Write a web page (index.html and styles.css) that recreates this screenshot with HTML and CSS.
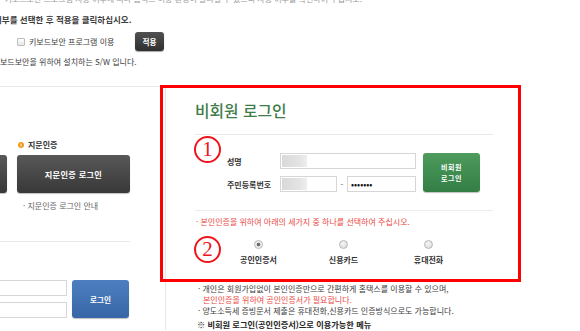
FILE: index.html
```html
<!DOCTYPE html>
<html lang="ko">
<head>
  <meta charset="UTF-8" />
  <meta name="viewport" content="width=device-width, initial-scale=1.0"/>
  <title>비회원 로그인</title>
  <link rel="stylesheet" href="styles.css">
</head>
<body>
  <div class="kb">
    <p class="kb-cut">· 키보드보안 프로그램 사용 여부에 따라 홈택스 이용 환경이 달라질 수 있으니 사용 여부를 확인하여 주십시오.</p>
    <p class="kb-guide">여부를 선택한 후 적용을 클릭하십시오.</p>
    <div class="kb-opt">
      <span class="chk"></span>
      <span class="kb-label">키보드보안 프로그램 이용</span>
      <button class="btn-apply">적용</button>
    </div>
    <p class="kb-desc">보드보안을 위하여 설치하는 S/W 입니다.</p>
  </div>

  <div class="main">
    <div class="auth-col">
      <div class="auth-row">
        <div class="auth-item">
          <div class="auth-head"></div>
          <div class="btn-dark"></div>
        </div>
        <div class="auth-item">
          <div class="auth-head">
            <svg class="bullet" width="6" height="6" viewBox="0 0 6 6"><circle cx="3" cy="3" r="3" fill="#f19a1d"/><path d="M2.3 1.7 L3.6 3 L2.3 4.3" stroke="#fff" stroke-width="0.9" fill="none"/></svg>
            지문인증
          </div>
          <div class="btn-dark">지문인증 로그인</div>
          <p class="auth-note">· 지문인증 로그인 안내</p>
        </div>
      </div>

      <div class="login-box">
        <div class="login-row">
          <div class="login-fields">
            <div class="ipt"></div>
            <div class="ipt"></div>
          </div>
          <div class="btn-blue">로그인</div>
        </div>
      </div>
    </div>

    <div class="nm-panel">
      <h2 class="nm-title">비회원 로그인</h2>

      <div class="nm-form">
        <div class="fields">
          <div class="frow">
            <span class="flabel">성명</span>
            <div class="ipt ipt-name"><span class="blur"></span></div>
          </div>
          <div class="frow">
            <span class="flabel">주민등록번호</span>
            <div class="ipt ipt-j1"><span class="blur"></span></div>
            <span class="dash">-</span>
            <div class="ipt ipt-j2"><span class="pw">•••••••</span></div>
          </div>
        </div>
        <div class="btn-green">비회원<br>로그인</div>
      </div>

      <div class="nm-auth">
        <p class="notice">· 본인인증을 위하여 아래의 세가지 중 하나를 선택하여 주십시오.</p>
        <div class="radios">
          <div class="ropt"><span class="radio on"></span><span class="rlabel">공인인증서</span></div>
          <div class="ropt"><span class="radio"></span><span class="rlabel">신용카드</span></div>
          <div class="ropt"><span class="radio"></span><span class="rlabel">휴대전화</span></div>
        </div>
      </div>

      <div class="nm-notes">
        <p>· 개인은 회원가입없이 본인인증만으로 간편하게 홈택스를 이용할 수 있으며,<br><span class="red">본인인증을 위하여 공인인증서가 필요합니다.</span></p>
        <p>· 양도소득세 증빙문서 제출은 휴대전화,신용카드 인증방식으로도 가능합니다.</p>
        <p class="menu-title">※ 비회원 로그인(공인인증서)으로 이용가능한 메뉴</p>
      </div>
    </div>
  </div>

  <!-- annotation overlay -->
  <div class="mark-box"></div>
  <span class="mark-num num1">1</span>
  <span class="mark-num num2">2</span>
</body>
</html>
```

FILE: styles.css
```css
body {
  margin: 0;
  width: 580px;
  height: 331px;
  overflow: hidden;
  position: relative;
  background: #fff;
  font-family: 'Noto Sans CJK KR', 'Noto Sans', sans-serif;
  font-size: 8px;
  line-height: 11px;
  color: #3c3c3c;
}

p, h2 {
  margin: 0;
}

/* keyboard security */
.kb-cut {
  margin-top: -7px;
  color: #999;
  white-space: nowrap;
}

.kb-guide {
  margin-top: 10px;
  margin-left: -6px;
  font-size: 8.5px;
  font-weight: bold;
  color: #3c3c3c;
}

.kb-opt {
  display: flex;
  align-items: center;
  height: 19px;
  margin-top: 7px;
  padding-left: 17px;
}

.chk {
  width: 6px;
  height: 6px;
  border: 1px solid #bcbcbc;
  border-radius: 1px;
  background: linear-gradient(#fff, #e6e6e6);
}

.kb-label {
  margin-left: 4px;
  width: 106px;
}

.btn-apply {
  width: 29px;
  height: 19px;
  padding: 0;
  border: 0;
  border-radius: 3px;
  background: linear-gradient(#505050, #303030);
  box-shadow: 0 1px 1px rgba(0, 0, 0, 0.35);
  color: #fff;
  font-family: inherit;
  font-size: 7.6px;
  font-weight: bold;
}

.kb-desc {
  margin-top: 5px;
}

/* main area */
.main {
  display: flex;
  margin-top: 19px;
}

.auth-col {
  width: 160px;
  border-top: 1px solid #e8e8e8;
  padding-top: 52px;
  flex-shrink: 0;
}

.auth-row {
  display: flex;
  gap: 10px;
  margin-left: -106px;
}

.auth-item {
  width: 113px;
}

.auth-head {
  display: flex;
  align-items: center;
  gap: 4px;
  height: 11px;
  padding-left: 1px;
  font-weight: bold;
  color: #333;
}

.btn-dark {
  display: flex;
  align-items: center;
  justify-content: center;
  height: 38px;
  margin-top: 5px;
  border-radius: 3px;
  background: linear-gradient(#585858, #383838);
  box-shadow: 0 1px 1px rgba(0, 0, 0, 0.25);
  color: #fff;
  font-size: 8.2px;
  font-weight: bold;
  letter-spacing: 0.3px;
}

.auth-note {
  margin-top: 7px;
  padding-left: 6px;
  color: #666;
}

.login-box {
  width: 130px;
  margin-top: 30px;
  padding-top: 38px;
  border-top: 1px solid #eaeaea;
}

.login-row {
  display: flex;
  gap: 5px;
  margin-left: -40px;
}

.login-fields {
  display: flex;
  flex-direction: column;
  gap: 6px;
  width: 107px;
}

.ipt {
  box-sizing: border-box;
  height: 16px;
  border: 1px solid #d6d6d6;
  background: #fff;
}

.btn-blue {
  display: flex;
  align-items: center;
  justify-content: center;
  width: 57px;
  height: 38px;
  border-radius: 3px;
  background: linear-gradient(#4d7fc0, #3866a6);
  box-shadow: 0 1px 1px rgba(0, 0, 0, 0.25);
  color: #fff;
  font-size: 7.6px;
  font-weight: bold;
}

/* non-member panel */
.nm-panel {
  margin-left: 5px;
  margin-top: 2px;
  padding: 13px 0 0 29px;
  width: 322px;
  border-left: 1px solid #e6e6e6;
}

.nm-title {
  width: 298px;
  padding-bottom: 14px;
  border-bottom: 1px solid #e8e8e8;
  font-size: 15.8px;
  line-height: 19px;
  font-weight: 500;
  color: #3e7c49;
}

.nm-form {
  display: flex;
  margin: 18px 0 0 32px;
}

.fields {
  width: 189px;
}

.frow {
  display: flex;
  align-items: center;
  height: 16px;
}

.frow + .frow {
  margin-top: 7px;
}

.flabel {
  width: 53px;
  font-size: 8px;
  font-weight: bold;
  color: #333;
}

.ipt-name {
  width: 136px;
  padding: 1px;
}

.ipt-j1 {
  width: 57px;
  padding: 1px;
}

.dash {
  width: 10px;
  text-align: center;
  color: #555;
}

.ipt-j2 {
  width: 69px;
  display: flex;
  align-items: center;
  padding-left: 3px;
}

.blur {
  display: block;
  width: 25px;
  height: 12px;
  background: linear-gradient(90deg, #d9d9d9, #e4e4e4 70%, #eeeeee);
}

.pw {
  font-size: 9px;
  color: #111;
}

.btn-green {
  display: flex;
  align-items: center;
  justify-content: center;
  width: 57px;
  height: 39px;
  margin-left: 7px;
  border-radius: 3px;
  background: linear-gradient(#4e9b5d, #327e45);
  box-shadow: 0 1px 1px rgba(0, 0, 0, 0.25);
  color: #fff;
  font-size: 7px;
  font-weight: bold;
  line-height: 11px;
  text-align: center;
  letter-spacing: 0.5px;
}

.nm-auth {
  width: 298px;
  margin-top: 18px;
  border-top: 1px solid #ececec;
}

.notice {
  margin-top: 5px;
  padding-left: 1px;
  color: #ea4a45;
}

.radios {
  display: flex;
  margin: 13px 0 0 21px;
}

.ropt {
  display: flex;
  flex-direction: column;
  align-items: center;
  width: 85px;
}

.radio {
  box-sizing: border-box;
  width: 9px;
  height: 9px;
  border: 1px solid #b8b8b8;
  border-radius: 50%;
  background: radial-gradient(circle at 40% 35%, #f6f6f6, #d6d6d6);
}

.radio.on {
  background: radial-gradient(circle, #707070 0 1.6px, #eeeeee 2.2px);
}

.rlabel {
  margin-top: 5px;
  font-size: 8px;
  font-weight: bold;
  color: #333;
}

.nm-notes {
  margin: 18px 0 0 3px;
}

.nm-notes p {
  padding-left: 5px;
  text-indent: -5px;
}

.red {
  color: #ea4a45;
}

.nm-notes .menu-title {
  margin-top: 3px;
  margin-left: -1px;
  font-size: 8.2px;
  font-weight: bold;
  color: #222;
}

/* annotation overlay */
.mark-box {
  position: absolute;
  left: 160px;
  top: 85px;
  width: 361px;
  height: 197px;
  box-sizing: border-box;
  border: 3px solid #ff0000;
}

.mark-num {
  position: absolute;
  left: 194px;
  width: 27px;
  height: 27px;
  box-sizing: border-box;
  border: 2px solid #f0141a;
  border-radius: 50%;
  color: #f0141a;
  font-family: 'Liberation Serif', serif;
  font-size: 21px;
  line-height: 23px;
  text-align: center;
}

.num1 {
  top: 136px;
}

.num2 {
  top: 236px;
}
```
